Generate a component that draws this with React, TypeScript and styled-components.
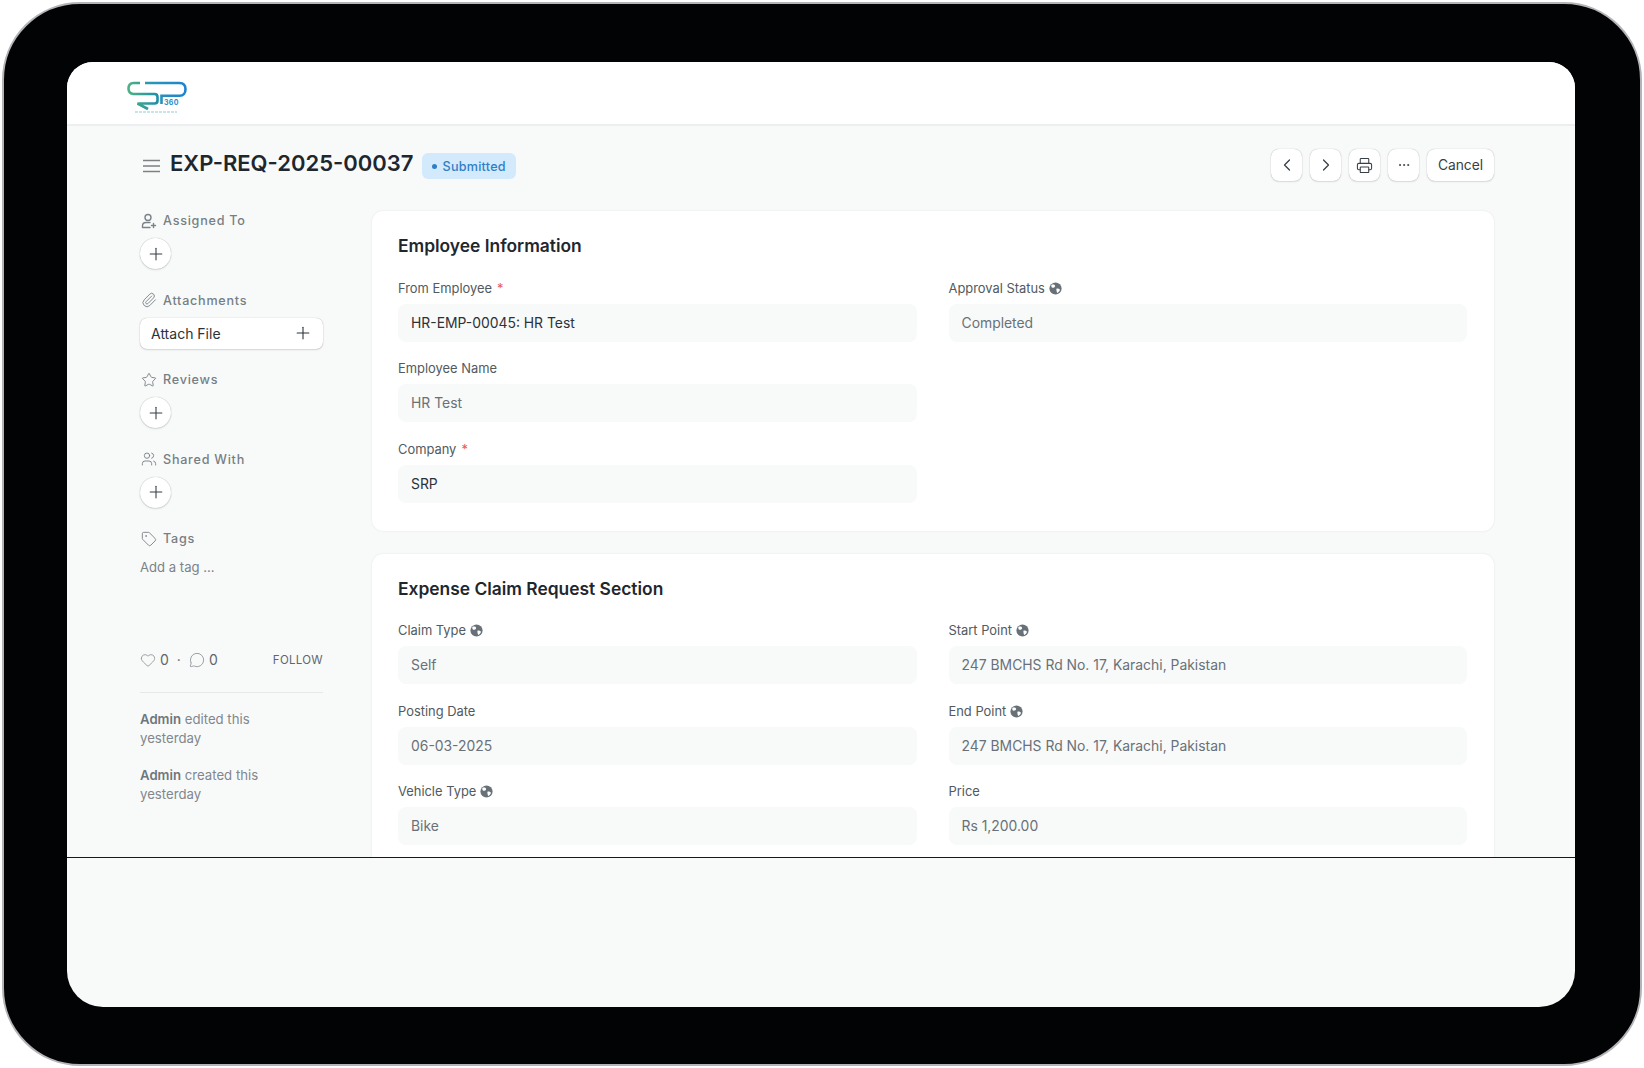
import React from "react";
import styled, { createGlobalStyle } from "styled-components";
import {
  ChevronLeft,
  ChevronRight,
  Ellipsis,
  Heart,
  MessageCircle,
  Paperclip,
  Plus,
  Printer,
  Star,
  Tag,
  Users,
} from "lucide-react";

const GlobalStyle = createGlobalStyle`
  html, body {
    margin: 0;
    padding: 0;
    background: #fff;
    font-family: Inter, "Liberation Sans", sans-serif;
  }
  * {
    box-sizing: border-box;
  }
`;

const Frame = styled.div`
  width: 1640px;
  height: 1064px;
  margin: 2px 0 0 2px;
  padding: 58px 65px 57px 63px;
  background: #020304;
  border: 2px solid #b4b4b8;
  border-radius: 78px;
`;

const Screen = styled.div`
  height: 100%;
  display: flex;
  flex-direction: column;
  overflow: hidden;
  background: #f8fafa;
  border-radius: 26px 26px 36px 36px;
`;

const Viewport = styled.div`
  height: 796px;
  flex-shrink: 0;
  overflow: hidden;
  border-bottom: 1px solid #16181a;
`;

const TopBar = styled.header`
  height: 64px;
  padding: 19px 0 0 60px;
  background: #fff;
  border-bottom: 2px solid #eceeef;
`;

const Content = styled.main`
  padding: 23px 81px 0 73px;
`;

const PageHead = styled.div`
  height: 32px;
  margin-bottom: 30px;
  display: flex;
  align-items: center;
  justify-content: space-between;
`;

const TitleGroup = styled.div`
  display: flex;
  align-items: center;
`;

const MenuIcon = styled.svg`
  width: 17px;
  height: 14px;
  margin: 2px 10px 0 3px;
  color: #7c7f83;
`;

const Title = styled.h1`
  margin: 0 8px 0 0;
  font-size: 22px;
  line-height: 28px;
  font-weight: 600;
  color: #1f272e;
  position: relative;
  top: -2px;
`;

const Badge = styled.span`
  height: 26px;
  margin-top: 2px;
  padding: 0 10px;
  display: inline-flex;
  align-items: center;
  gap: 6px;
  border-radius: 6px;
  background: #d3e9fc;
  color: #2f7fc4;
  font-size: 12.6px;
  font-weight: 500;
  letter-spacing: 0.25px;
`;

const BadgeDot = styled.i`
  width: 5px;
  height: 5px;
  border-radius: 50%;
  background: #2f7fc4;
`;

const Actions = styled.div`
  display: flex;
  gap: 8px;
`;

const ActionButton = styled.button<{ $wide?: boolean }>`
  width: ${(props) => (props.$wide ? "67px" : "31px")};
  height: 32px;
  padding: 0;
  display: flex;
  align-items: center;
  justify-content: center;
  background: #fff;
  border: none;
  border-radius: 8px;
  box-shadow: 0 0 1px rgba(0, 0, 0, 0.35), 0 1px 2px rgba(0, 0, 0, 0.1);
  color: #383f45;
  font-family: inherit;
  font-size: 13.8px;
`;

const Body = styled.div`
  display: grid;
  grid-template-columns: 183px 1fr;
  column-gap: 49px;
  align-items: start;
`;

const Sidebar = styled.aside`
  display: flex;
  flex-direction: column;
`;

const SideSection = styled.section`
  height: 79.5px;
  display: flex;
  flex-direction: column;
  align-items: flex-start;
  gap: 8px;
`;

const SideLabel = styled.div`
  height: 19px;
  display: flex;
  align-items: center;
  gap: 6px;
  padding-left: 1px;
  color: #777e84;
  font-size: 12.6px;
  font-weight: 500;
  letter-spacing: 0.75px;
  svg {
    width: 16px;
    height: 16px;
    color: #7c8288;
    stroke-width: 1.4;
  }
`;

const RoundButton = styled.button`
  width: 31px;
  height: 31px;
  padding: 0;
  display: flex;
  align-items: center;
  justify-content: center;
  background: #fff;
  border: none;
  border-radius: 50%;
  box-shadow: 0 0 1px rgba(0, 0, 0, 0.35), 0 1px 2px rgba(0, 0, 0, 0.12);
  color: #383f45;
  svg {
    width: 20px;
    height: 20px;
    stroke-width: 1.3;
  }
`;

const AttachButton = styled.button`
  width: 100%;
  height: 31px;
  padding: 0 10px 0 11px;
  display: flex;
  align-items: center;
  justify-content: space-between;
  background: #fff;
  border: none;
  border-radius: 7px;
  box-shadow: 0 0 1px rgba(0, 0, 0, 0.35), 0 1px 2px rgba(0, 0, 0, 0.12);
  color: #2c3237;
  font-family: inherit;
  font-size: 14px;
  svg {
    width: 20px;
    height: 20px;
    stroke-width: 1.3;
  }
`;

const AddTag = styled.div`
  margin-top: 3px;
  color: #7c8288;
  font-size: 13.1px;
  line-height: 16px;
`;

const StatsRow = styled.div`
  margin-top: 41px;
  height: 20px;
  display: flex;
  align-items: center;
  justify-content: space-between;
`;

const Stats = styled.div`
  display: flex;
  align-items: center;
  gap: 4px;
  color: #5f666c;
  font-size: 14px;
  svg {
    width: 16px;
    height: 16px;
    color: #868c92;
    stroke-width: 1.2;
  }
`;

const StatDot = styled.span`
  margin: 0 4px;
`;

const Follow = styled.span`
  color: #5f666c;
  font-size: 11.5px;
  font-weight: 400;
  letter-spacing: 0.3px;
`;

const Divider = styled.hr`
  width: 100%;
  margin: 22px 0 17px;
  border: none;
  border-top: 1px solid #e6e9ea;
`;

const Activity = styled.p`
  margin: 0 0 17px;
  color: #81878d;
  font-size: 13.2px;
  line-height: 19.5px;
  width: 150px;
  b {
    color: #6f767c;
    font-weight: 600;
  }
`;

const Cards = styled.div`
  display: flex;
  flex-direction: column;
  gap: 23px;
`;

const Card = styled.section`
  padding: 25px 27px 28px 26px;
  background: #fff;
  border-radius: 11px;
  box-shadow: 0 0 2px rgba(0, 0, 0, 0.1);
`;

const CardTitle = styled.h2`
  margin: 0 0 24px;
  color: #1f272e;
  font-size: 17.4px;
  line-height: 20px;
  font-weight: 600;
`;

const FieldGrid = styled.div`
  display: grid;
  grid-template-columns: 1fr 1fr;
  column-gap: 32px;
`;

const Column = styled.div`
  display: flex;
  flex-direction: column;
  gap: 19px;
`;

const Field = styled.div`
  display: flex;
  flex-direction: column;
  gap: 7.5px;
`;

const FieldLabel = styled.label`
  height: 16px;
  display: flex;
  align-items: center;
  gap: 4px;
  color: #525a60;
  font-size: 12.9px;
`;

const Required = styled.span`
  color: #e35b5b;
  margin-left: 1px;
`;

const FieldValue = styled.div<{ $strong?: boolean }>`
  height: 38px;
  padding: 0 13px;
  display: flex;
  align-items: center;
  background: #f8f9f9;
  border-radius: 8px;
  color: ${(props) => (props.$strong ? "#2c3237" : "#687178")};
  font-size: 13.9px;
`;

const Lower = styled.div`
  flex: 1;
`;

const LogoText = styled.text`
  font-family: Inter, "Liberation Sans", sans-serif;
  font-size: 7px;
  font-weight: 700;
  letter-spacing: 0.3px;
  fill: #2a8ccb;
`;

const Logo = () => (
  <svg width="60" height="34" viewBox="0 0 60 34" fill="none">
    <defs>
      <linearGradient id="logoS" x1="0" x2="1" y1="0" y2="0">
        <stop offset="0" stopColor="#4bb283" />
        <stop offset="1" stopColor="#1f8fa8" />
      </linearGradient>
      <linearGradient id="logoP" x1="0" x2="1" y1="0" y2="0">
        <stop offset="0" stopColor="#2a9bb0" />
        <stop offset="1" stopColor="#1f83d0" />
      </linearGradient>
    </defs>
    <path
      d="M13 2H6.500C3 2 1.500 4.500 1.500 7.500S3 13 6.500 13H27.500C29.500 13 30.500 14 30.500 16V19.500C30.500 21.500 29.500 22.500 27.500 22.500H10.500L21 28"
      stroke="url(#logoS)"
      strokeWidth="2.600"
    />
    <path
      d="M18 2H52.500C56.500 2 58.500 4.500 58.500 8.300S56.500 14.800 52.500 14.800H34.500V23"
      stroke="url(#logoP)"
      strokeWidth="2.600"
    />
    <LogoText x="37" y="23.500">360</LogoText>
    <path d="M8 31H50" stroke="#8fcad2" strokeWidth="1.200" strokeDasharray="3 1" />
  </svg>
);

const UserPlus = () => (
  <svg viewBox="0 0 16 16" fill="none" stroke="currentColor" strokeWidth="1.100" strokeLinecap="round">
    <circle cx="7" cy="4.500" r="3" />
    <path d="M1.500 14.500V13C1.500 10.800 3 9.500 5 9.500H9" />
    <path d="M2 14.500H9M12.500 10.500V14.500M10.500 12.500H14.500" />
  </svg>
);

const Globe = () => (
  <svg width="13" height="13" viewBox="0 0 16 16">
    <circle cx="8" cy="8" r="7.500" fill="#687178" />
    <path
      d="M3 3.500C5 2.500 7 3 7.500 4.500S6 7 4.500 7 2.500 5.500 3 3.500ZM9.500 8C11 7.500 13 8.500 13.500 9.500 13 11.500 11.500 13 10 13.500 9.500 12 8.500 9 9.500 8Z"
      fill="#fff"
    />
  </svg>
);

type FieldInfo = {
  label: string;
  value: string;
  required?: boolean;
  globe?: boolean;
  strong?: boolean;
};

const FieldItem = ({ label, value, required, globe, strong }: FieldInfo) => (
  <Field>
    <FieldLabel>
      {label}
      {required && <Required>*</Required>}
      {globe && <Globe />}
    </FieldLabel>
    <FieldValue $strong={strong}>{value}</FieldValue>
  </Field>
);

const Section = ({ title, left, right }: { title: string; left: FieldInfo[]; right: FieldInfo[] }) => (
  <Card>
    <CardTitle>{title}</CardTitle>
    <FieldGrid>
      <Column>
        {left.map((f) => (
          <FieldItem key={f.label} {...f} />
        ))}
      </Column>
      <Column>
        {right.map((f) => (
          <FieldItem key={f.label} {...f} />
        ))}
      </Column>
    </FieldGrid>
  </Card>
);

const address = "247 BMCHS Rd No. 17, Karachi, Pakistan";

const App = () => (
  <>
    <GlobalStyle />
    <Frame>
      <Screen>
        <Viewport>
          <TopBar>
            <Logo />
          </TopBar>
          <Content>
            <PageHead>
              <TitleGroup>
                <MenuIcon viewBox="0 0 17 14" fill="none" stroke="currentColor" strokeWidth="1.300">
                  <path d="M0 1.500H17M0 7H17M0 12.500H17" />
                </MenuIcon>
                <Title>EXP-REQ-2025-00037</Title>
                <Badge>
                  <BadgeDot />
                  Submitted
                </Badge>
              </TitleGroup>
              <Actions>
                <ActionButton>
                  <ChevronLeft size={20} strokeWidth={1.5} />
                </ActionButton>
                <ActionButton>
                  <ChevronRight size={20} strokeWidth={1.5} />
                </ActionButton>
                <ActionButton>
                  <Printer size={17} strokeWidth={1.5} />
                </ActionButton>
                <ActionButton>
                  <Ellipsis size={14} strokeWidth={1.6} />
                </ActionButton>
                <ActionButton $wide>Cancel</ActionButton>
              </Actions>
            </PageHead>
            <Body>
              <Sidebar>
                <SideSection>
                  <SideLabel>
                    <UserPlus />
                    Assigned To
                  </SideLabel>
                  <RoundButton>
                    <Plus />
                  </RoundButton>
                </SideSection>
                <SideSection>
                  <SideLabel>
                    <Paperclip />
                    Attachments
                  </SideLabel>
                  <AttachButton>
                    Attach File
                    <Plus />
                  </AttachButton>
                </SideSection>
                <SideSection>
                  <SideLabel>
                    <Star />
                    Reviews
                  </SideLabel>
                  <RoundButton>
                    <Plus />
                  </RoundButton>
                </SideSection>
                <SideSection>
                  <SideLabel>
                    <Users />
                    Shared With
                  </SideLabel>
                  <RoundButton>
                    <Plus />
                  </RoundButton>
                </SideSection>
                <SideSection>
                  <SideLabel>
                    <Tag />
                    Tags
                  </SideLabel>
                  <AddTag>Add a tag ...</AddTag>
                </SideSection>
                <StatsRow>
                  <Stats>
                    <Heart />
                    0
                    <StatDot>·</StatDot>
                    <MessageCircle />
                    0
                  </Stats>
                  <Follow>FOLLOW</Follow>
                </StatsRow>
                <Divider />
                <Activity>
                  <b>Admin</b> edited this yesterday
                </Activity>
                <Activity>
                  <b>Admin</b> created this yesterday
                </Activity>
              </Sidebar>
              <Cards>
                <Section
                  title="Employee Information"
                  left={[
                    { label: "From Employee", value: "HR-EMP-00045: HR Test", required: true, strong: true },
                    { label: "Employee Name", value: "HR Test" },
                    { label: "Company", value: "SRP", required: true, strong: true },
                  ]}
                  right={[{ label: "Approval Status", value: "Completed", globe: true }]}
                />
                <Section
                  title="Expense Claim Request Section"
                  left={[
                    { label: "Claim Type", value: "Self", globe: true },
                    { label: "Posting Date", value: "06-03-2025" },
                    { label: "Vehicle Type", value: "Bike", globe: true },
                  ]}
                  right={[
                    { label: "Start Point", value: address, globe: true },
                    { label: "End Point", value: address, globe: true },
                    { label: "Price", value: "Rs 1,200.00" },
                  ]}
                />
              </Cards>
            </Body>
          </Content>
        </Viewport>
        <Lower />
      </Screen>
    </Frame>
  </>
);

export default App;
